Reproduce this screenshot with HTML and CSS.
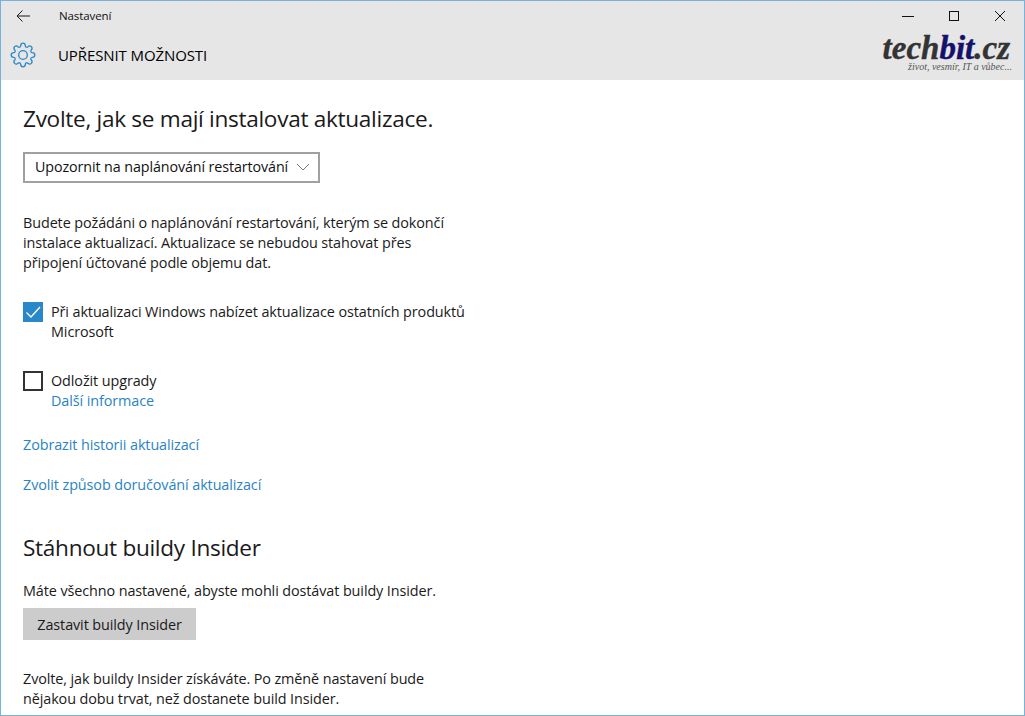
FILE: index.html
```html
<!DOCTYPE html>
<html lang="cs">
<head>
    <meta charset="UTF-8">
    <meta name="viewport" content="width=device-width, initial-scale=1.0">
    <title>Nastavení</title>
    <link rel="stylesheet" href="styles.css">
</head>
<body>
    <div class="window">
        <header class="top">
            <div class="titlebar">
                <svg class="back" width="16" height="16" viewBox="0 0 16 16"><path d="M15 8H2M7.500 2.500L2 8l5.500 5.500" fill="none" stroke="#1a1a1a" stroke-width="1"/></svg>
                <span class="app-name">Nastavení</span>
                <div class="controls">
                    <svg width="12" height="12" viewBox="0 0 12 12"><path d="M0 6.500h12" stroke="#111" fill="none"/></svg>
                    <svg width="12" height="12" viewBox="0 0 12 12"><rect x="1.500" y="1.500" width="9" height="9" stroke="#111" fill="none"/></svg>
                    <svg width="12" height="12" viewBox="0 0 12 12"><path d="M1 1l10 10M11 1L1 11" stroke="#111" fill="none"/></svg>
                </div>
            </div>
            <div class="pagebar">
                <svg class="gear" width="26" height="26" viewBox="0 0 26 26">
                    <g fill="none" stroke="#2b88c8" stroke-width="1.300">
                        <circle cx="13" cy="13" r="4.300"/>
                        <path id="lobe" d="M9.750 5.150Q10.600 4.700 10.700 3.600 10.800 1.200 13 1.200 15.200 1.200 15.300 3.600 15.400 4.700 16.250 5.150"/>
                        <use href="#lobe" transform="rotate(45 13 13)"/>
                        <use href="#lobe" transform="rotate(90 13 13)"/>
                        <use href="#lobe" transform="rotate(135 13 13)"/>
                        <use href="#lobe" transform="rotate(180 13 13)"/>
                        <use href="#lobe" transform="rotate(225 13 13)"/>
                        <use href="#lobe" transform="rotate(270 13 13)"/>
                        <use href="#lobe" transform="rotate(315 13 13)"/>
                    </g>
                </svg>
                <span class="page-name">UPŘESNIT MOŽNOSTI</span>
                <div class="logo">
                    <div class="logo-main">tech<span class="logo-bit">bit</span>.cz</div>
                    <div class="logo-sub">život, vesmír, IT a vůbec...</div>
                </div>
            </div>
        </header>

        <main class="content">
            <h2 class="heading">Zvolte, jak se mají instalovat aktualizace.</h2>
            <div class="select">
                <span>Upozornit na naplánování restartování</span>
                <svg width="14" height="8" viewBox="0 0 14 8"><path d="M1 1l6 6 6-6" fill="none" stroke="#777"/></svg>
            </div>
            <p class="text note">Budete požádáni o naplánování restartování, kterým se dokončí instalace aktualizací. Aktualizace se nebudou stahovat přes připojení účtované podle objemu dat.</p>

            <div class="check-row first">
                <span class="box checked"><svg width="20" height="20" viewBox="0 0 20 20"><path d="M3.500 10.500l4.500 4.500 9-10" fill="none" stroke="#fff" stroke-width="1.300"/></svg></span>
                <span class="text">Při aktualizaci Windows nabízet aktualizace ostatních produktů Microsoft</span>
            </div>
            <div class="check-row second">
                <span class="box"></span>
                <div class="text">Odložit upgrady<br><a class="link" href="#">Další informace</a></div>
            </div>

            <a class="link block history" href="#">Zobrazit historii aktualizací</a>
            <a class="link block delivery" href="#">Zvolit způsob doručování aktualizací</a>

            <h2 class="heading insider">Stáhnout buildy Insider</h2>
            <p class="text ready">Máte všechno nastavené, abyste mohli dostávat buildy Insider.</p>
            <button class="btn">Zastavit buildy Insider</button>
            <p class="text choose">Zvolte, jak buildy Insider získáváte. Po změně nastavení bude nějakou dobu trvat, než dostanete build Insider.</p>
        </main>
    </div>
</body>
</html>
```

FILE: styles.css
```css
html, body {
    margin: 0;
    height: 100%;
    overflow: hidden;
}
body {
    font-family: "Open Sans", "Noto Sans", sans-serif;
    color: #111;
    background: white;
}
.window {
    height: 716px;
    box-sizing: border-box;
    border: 1px solid #74b4dc;
    overflow: hidden;
}
.top {
    background: #e6e6e6;
    height: 79px;
}
.titlebar {
    display: flex;
    align-items: center;
    height: 29px;
}
.back {
    margin-left: 14px;
}
.app-name {
    margin-left: 28px;
    font-size: 11.500px;
    letter-spacing: -0.1px;
}
.controls {
    margin-left: auto;
    display: flex;
    gap: 34px;
    padding-right: 18px;
}
.pagebar {
    display: flex;
    align-items: center;
    height: 50px;
}
.gear {
    margin-left: 9px;
}
.page-name {
    margin-left: 22px;
    font-size: 15px;
    letter-spacing: -0.1px;
    color: #000;
}
.logo {
    margin-left: auto;
    padding-right: 12px;
    text-align: right;
    margin-top: -3px;
    font-family: "Liberation Serif", serif;
    font-style: italic;
}
.logo-main {
    margin-right: 2px;
    font-size: 33px;
    font-weight: bold;
    line-height: 25px;
    color: #333;
    -webkit-text-stroke: 0.4px currentColor;
}
.logo-bit {
    color: #14106b;
}
.logo-sub {
    font-size: 10px;
    line-height: 11px;
    color: #555;
}
.content {
    padding: 0 0 0 22px;
}
.heading {
    margin: 0;
    font-size: 22.600px;
    font-weight: 400;
    line-height: 28px;
    letter-spacing: -0.3px;
    color: #1a1a1a;
}
.content > .heading:first-child {
    margin-top: 25px;
}
.text {
    font-size: 14.400px;
    line-height: 20px;
    letter-spacing: -0.1px;
    color: #1a1a1a;
}
p.text {
    margin: 0;
    width: 440px;
}
.select {
    margin-top: 19px;
    width: 297px;
    height: 31px;
    box-sizing: border-box;
    border: 2px solid #a0a0a0;
    display: flex;
    align-items: center;
    justify-content: space-between;
    padding: 0 8px 2px 10px;
    font-size: 14.300px;
    letter-spacing: -0.1px;
}
.note {
    margin-top: 30px !important;
}
.check-row {
    display: flex;
    gap: 8px;
    width: 450px;
}
.check-row.first {
    margin-top: 29px;
}
.check-row.second {
    margin-top: 29px;
}
.box {
    flex: none;
    width: 20px;
    height: 20px;
    box-sizing: border-box;
    border: 2px solid #333;
}
.box.checked {
    border: 0;
    background: #2b88c8;
}
.box svg {
    display: block;
}
.link {
    color: #2a84c2;
    text-decoration: none;
    font-size: 14.400px;
    line-height: 20px;
    letter-spacing: -0.1px;
}
.block {
    display: block;
    width: fit-content;
}
.history {
    margin-top: 24px;
}
.delivery {
    margin-top: 20px;
}
.insider {
    margin-top: 39px;
}
.ready {
    margin-top: 19px !important;
}
.btn {
    display: block;
    margin-top: 7px;
    width: 173px;
    height: 32px;
    border: 0;
    padding: 0;
    background: #cccccc;
    color: #1a1a1a;
    font-family: inherit;
    font-size: 14.400px;
    letter-spacing: -0.1px;
}
.choose {
    margin-top: 29px !important;
}
```
